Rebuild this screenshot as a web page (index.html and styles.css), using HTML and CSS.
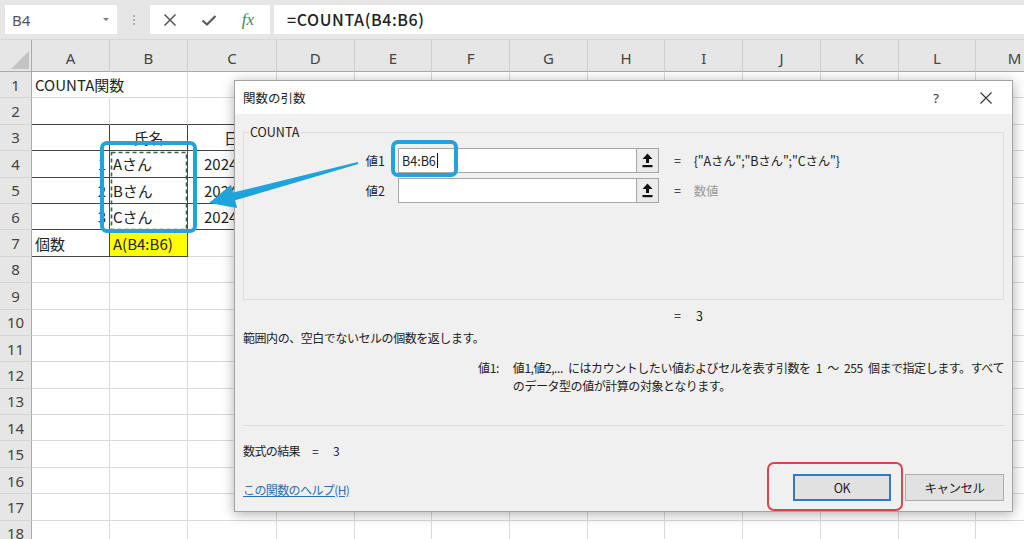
FILE: index.html
```html
<!DOCTYPE html>
<html lang="ja">
<head>
<meta charset="utf-8">
<title>COUNTA関数</title>
<link rel="stylesheet" href="styles.css">
</head>
<body>
<div class="app">
  <div class="fbar">
    <div class="namebox"><span>B4</span><svg class="dd" width="8" height="5" viewBox="0 0 8 5"><path d="M1 1 L4 4 L7 1 Z" fill="#7a7a7a"/></svg></div>
    <div class="grip"><svg width="4" height="12" viewBox="0 0 4 12"><circle cx="2" cy="2" r="1" fill="#9a9a9a"/><circle cx="2" cy="6" r="1" fill="#9a9a9a"/><circle cx="2" cy="10" r="1" fill="#9a9a9a"/></svg></div>
    <div class="fbtns">
      <svg class="fic" width="16" height="16" viewBox="0 0 16 16"><path d="M2.5 2.5 L13.5 13.5 M13.5 2.5 L2.5 13.5" stroke="#5a5a5a" stroke-width="1.6" fill="none"/></svg>
      <svg class="fic" width="16" height="16" viewBox="0 0 16 16"><path d="M1.5 8.5 L6 12.5 L14.5 4" stroke="#5a5a5a" stroke-width="2.2" fill="none"/></svg>
      <span class="fx">fx</span>
    </div>
    <div class="formula">=COUNTA(B4:B6)</div>
  </div>

  <div class="sheet">
    <div class="corner"><svg width="32" height="32" viewBox="0 0 32 32"><path d="M11 29 L29 29 L29 11 Z" fill="#c3c3c3"/></svg></div>
    <div class="ch">A</div><div class="ch">B</div><div class="ch">C</div><div class="ch">D</div><div class="ch">E</div><div class="ch">F</div><div class="ch">G</div><div class="ch">H</div><div class="ch">I</div><div class="ch">J</div><div class="ch">K</div><div class="ch">L</div><div class="ch">M</div>

    <div class="rh">1</div><div class="c nr">COUNTA関数</div><div class="c"></div><div class="c"></div><div class="c"></div><div class="c"></div><div class="c"></div><div class="c"></div><div class="c"></div><div class="c"></div><div class="c"></div><div class="c"></div><div class="c"></div><div class="c"></div>
    <div class="rh">2</div><div class="c db"></div><div class="c db"></div><div class="c db"></div><div class="c"></div><div class="c"></div><div class="c"></div><div class="c"></div><div class="c"></div><div class="c"></div><div class="c"></div><div class="c"></div><div class="c"></div><div class="c"></div>
    <div class="rh">3</div><div class="c db dr"></div><div class="c db dr ctr">氏名</div><div class="c db cc">日付</div><div class="c"></div><div class="c"></div><div class="c"></div><div class="c"></div><div class="c"></div><div class="c"></div><div class="c"></div><div class="c"></div><div class="c"></div><div class="c"></div>
    <div class="rh">4</div><div class="c db dr rt">1</div><div class="c db dr">Aさん</div><div class="c db cd">2024/4/1</div><div class="c"></div><div class="c"></div><div class="c"></div><div class="c"></div><div class="c"></div><div class="c"></div><div class="c"></div><div class="c"></div><div class="c"></div><div class="c"></div>
    <div class="rh">5</div><div class="c db dr rt">2</div><div class="c db dr">Bさん</div><div class="c db cd">2024/4/2</div><div class="c"></div><div class="c"></div><div class="c"></div><div class="c"></div><div class="c"></div><div class="c"></div><div class="c"></div><div class="c"></div><div class="c"></div><div class="c"></div>
    <div class="rh">6</div><div class="c db dr rt">3</div><div class="c db dr">Cさん</div><div class="c db cd">2024/4/3</div><div class="c"></div><div class="c"></div><div class="c"></div><div class="c"></div><div class="c"></div><div class="c"></div><div class="c"></div><div class="c"></div><div class="c"></div><div class="c"></div>
    <div class="rh">7</div><div class="c db dr">個数</div><div class="c db dr yel">A(B4:B6)</div><div class="c"></div><div class="c"></div><div class="c"></div><div class="c"></div><div class="c"></div><div class="c"></div><div class="c"></div><div class="c"></div><div class="c"></div><div class="c"></div><div class="c"></div>
    <div class="rh">8</div><div class="c"></div><div class="c"></div><div class="c"></div><div class="c"></div><div class="c"></div><div class="c"></div><div class="c"></div><div class="c"></div><div class="c"></div><div class="c"></div><div class="c"></div><div class="c"></div><div class="c"></div>
    <div class="rh">9</div><div class="c"></div><div class="c"></div><div class="c"></div><div class="c"></div><div class="c"></div><div class="c"></div><div class="c"></div><div class="c"></div><div class="c"></div><div class="c"></div><div class="c"></div><div class="c"></div><div class="c"></div>
    <div class="rh">10</div><div class="c"></div><div class="c"></div><div class="c"></div><div class="c"></div><div class="c"></div><div class="c"></div><div class="c"></div><div class="c"></div><div class="c"></div><div class="c"></div><div class="c"></div><div class="c"></div><div class="c"></div>
    <div class="rh">11</div><div class="c"></div><div class="c"></div><div class="c"></div><div class="c"></div><div class="c"></div><div class="c"></div><div class="c"></div><div class="c"></div><div class="c"></div><div class="c"></div><div class="c"></div><div class="c"></div><div class="c"></div>
    <div class="rh">12</div><div class="c"></div><div class="c"></div><div class="c"></div><div class="c"></div><div class="c"></div><div class="c"></div><div class="c"></div><div class="c"></div><div class="c"></div><div class="c"></div><div class="c"></div><div class="c"></div><div class="c"></div>
    <div class="rh">13</div><div class="c"></div><div class="c"></div><div class="c"></div><div class="c"></div><div class="c"></div><div class="c"></div><div class="c"></div><div class="c"></div><div class="c"></div><div class="c"></div><div class="c"></div><div class="c"></div><div class="c"></div>
    <div class="rh">14</div><div class="c"></div><div class="c"></div><div class="c"></div><div class="c"></div><div class="c"></div><div class="c"></div><div class="c"></div><div class="c"></div><div class="c"></div><div class="c"></div><div class="c"></div><div class="c"></div><div class="c"></div>
    <div class="rh">15</div><div class="c"></div><div class="c"></div><div class="c"></div><div class="c"></div><div class="c"></div><div class="c"></div><div class="c"></div><div class="c"></div><div class="c"></div><div class="c"></div><div class="c"></div><div class="c"></div><div class="c"></div>
    <div class="rh">16</div><div class="c"></div><div class="c"></div><div class="c"></div><div class="c"></div><div class="c"></div><div class="c"></div><div class="c"></div><div class="c"></div><div class="c"></div><div class="c"></div><div class="c"></div><div class="c"></div><div class="c"></div>
    <div class="rh">17</div><div class="c"></div><div class="c"></div><div class="c"></div><div class="c"></div><div class="c"></div><div class="c"></div><div class="c"></div><div class="c"></div><div class="c"></div><div class="c"></div><div class="c"></div><div class="c"></div><div class="c"></div>
    <div class="rh">18</div><div class="c"></div><div class="c"></div><div class="c"></div><div class="c"></div><div class="c"></div><div class="c"></div><div class="c"></div><div class="c"></div><div class="c"></div><div class="c"></div><div class="c"></div><div class="c"></div><div class="c"></div>
  </div>

  <div class="dialog">
    <div class="dtitle">
      <span class="dname">関数の引数</span>
      <span class="dq">?</span>
      <span class="dx"><svg width="12" height="12" viewBox="0 0 12 12"><path d="M0.5 0.5 L11.5 11.5 M11.5 0.5 L0.5 11.5" stroke="#333" stroke-width="1.1" fill="none"/></svg></span>
    </div>
    <div class="dbody">
      <div class="group">
        <div class="legend">COUNTA</div>
        <div class="args">
          <div class="alabel">値1</div>
          <div class="ainput"><span>B4:B6</span><span class="caret"></span></div>
          <div class="abtn"><svg width="11" height="15" viewBox="0 0 11 15"><path d="M5.5 0.5 L10.5 6 L7 6 L7 10 L4 10 L4 6 L0.5 6 Z" fill="#111"/><rect x="0.5" y="12" width="10" height="2.2" fill="#111"/></svg></div>
          <div class="aeq"><span>=</span><span class="aval">{"Aさん";"Bさん";"Cさん"}</span></div>
          <div class="alabel">値2</div>
          <div class="ainput"></div>
          <div class="abtn"><svg width="11" height="15" viewBox="0 0 11 15"><path d="M5.5 0.5 L10.5 6 L7 6 L7 10 L4 10 L4 6 L0.5 6 Z" fill="#111"/><rect x="0.5" y="12" width="10" height="2.2" fill="#111"/></svg></div>
          <div class="aeq"><span>=</span><span class="aval muted">数値</span></div>
        </div>
      </div>
      <div class="eqres"><span>=</span><span>3</span></div>
      <div class="desc">範囲内の、空白でないセルの個数を返します。</div>
      <div class="argdesc">
        <div class="adl">値1:</div>
        <div class="adt">値1,値2,... にはカウントしたい値およびセルを表す引数を 1 ～ 255 個まで指定します。すべて<br>のデータ型の値が計算の対象となります。</div>
      </div>
      <div class="sep"></div>
      <div class="result"><span>数式の結果</span><span class="req">=</span><span class="rval">3</span></div>
      <div class="footer">
        <a class="help" href="#">この関数のヘルプ(H)</a>
        <div class="btns">
          <div class="btn ok">OK</div>
          <div class="btn">キャンセル</div>
        </div>
      </div>
    </div>
  </div>

  <svg class="overlay" width="1024" height="539" viewBox="0 0 1024 539">
    <rect x="111.5" y="152.5" width="75" height="77" fill="none" stroke="#2f6a50" stroke-width="1.6" stroke-dasharray="4 3"/>
    <polygon points="209,203 231,184.8 233.1,192.5 357.7,162 358.3,164 235.1,200.3 237.2,208" fill="#1fa3dd"/>
  </svg>
  <div class="hl hl-range"></div>
  <div class="hl hl-input"></div>
  <div class="hl-red"></div>
</div>
</body>
</html>
```

FILE: styles.css
```css
* { box-sizing: border-box; }
html, body { margin: 0; padding: 0; }
body {
  width: 1024px;
  height: 539px;
  overflow: hidden;
  background: #fff;
  font-family: "Noto Sans CJK JP", "Noto Sans", sans-serif;
  color: #222;
}
.app { position: relative; width: 1024px; height: 539px; overflow: hidden; }

/* formula bar */
.fbar {
  height: 40px;
  background: #e6e6e6;
  display: flex;
  align-items: flex-start;
  padding: 5px 0 0 5px;
  border-bottom: 1px solid #d8d8d8;
}
.namebox {
  width: 112px;
  height: 29px;
  background: #fff;
  display: flex;
  align-items: center;
  justify-content: space-between;
  padding: 0 7px 0 7px;
  font-family: "Noto Sans", sans-serif;
  font-size: 15px;
  color: #555;
}
.grip { width: 33px; height: 29px; display: flex; align-items: center; justify-content: center; }
.fbtns {
  width: 120px;
  height: 29px;
  background: #fff;
  display: flex;
  align-items: center;
  padding-left: 12px;
  gap: 23px;
}
.fic { flex: none; }
.fx {
  width: 16px;
  font-family: "Liberation Serif", serif;
  font-style: italic;
  font-size: 17px;
  color: #3f8a58;
  line-height: 1;
  text-align: center;
}
.formula {
  flex: 1;
  height: 29px;
  margin-left: 4px;
  background: #fff;
  padding-left: 13px;
  font-size: 16px;
  line-height: 29px;
  font-weight: 500;
  letter-spacing: 0.6px;
  color: #222;
}

/* sheet */
.sheet {
  display: grid;
  grid-template-columns: 32px 78px 78px 89px repeat(10, 77.7px);
  grid-template-rows: 32px;
  grid-auto-rows: 26.4px;
  width: 1056px;
}
.corner { background: #e6e6e6; border-right: 1px solid #ababab; border-bottom: 1px solid #ababab; }
.corner svg { display: block; }
.ch {
  background: #e6e6e6;
  border-right: 1px solid #cfcfcf;
  border-bottom: 1px solid #ababab;
  display: flex;
  align-items: center;
  justify-content: center;
  padding-top: 4px;
  font-family: "Noto Sans", sans-serif;
  font-size: 15px;
  color: #444;
}
.rh {
  background: #e6e6e6;
  border-right: 1px solid #ababab;
  border-bottom: 1px solid #d4d4d4;
  display: flex;
  align-items: center;
  justify-content: center;
  font-family: "Noto Sans", sans-serif;
  font-size: 15px;
  color: #444;
}
.c {
  border-right: 1px solid #dadada;
  border-bottom: 1px solid #dadada;
  display: flex;
  align-items: center;
  padding: 0 3px;
  white-space: nowrap;
  overflow: visible;
  font-size: 15px;
  color: #222;
}
.c.nr { border-right-color: transparent; }
.c.db { border-bottom-color: #444; }
.c.dr { border-right-color: #444; }
.c.ctr { justify-content: center; }
.c.rt { justify-content: flex-end; padding-right: 3px; }
.c.cc { padding-left: 36px; overflow: hidden; }
.c.cd { padding-left: 16px; overflow: hidden; }
.c.yel { background: #ffff00; overflow: hidden; }

/* dialog */
.dialog {
  position: absolute;
  left: 234px;
  top: 80px;
  width: 779px;
  height: 432px;
  background: #f0f0f0;
  border: 1px solid #a3a3a3;
  box-shadow: 0 2px 12px rgba(0, 0, 0, 0.32);
  display: flex;
  flex-direction: column;
  font-size: 12px;
  color: #222;
}
.dtitle {
  height: 33px;
  background: #fff;
  display: flex;
  align-items: center;
  padding-left: 8px;
}
.dname { flex: 1; font-size: 12.5px; color: #222; }
.dq { width: 30px; text-align: center; font-family: "Noto Sans", sans-serif; font-size: 13px; color: #333; }
.dx { width: 30px; margin: 0 11px 0 20px; display: flex; justify-content: center; }
.dx svg { display: block; }

.dbody { flex: 1; padding: 0 8px; display: flex; flex-direction: column; }
.group {
  margin-top: 18px;
  height: 168px;
  border: 1px solid #dcdcdc;
}
.legend {
  width: fit-content;
  margin: -9px 0 0 5px;
  padding: 0 1px;
  background: #f0f0f0;
  line-height: 16px;
  font-size: 12.5px;
}
.args {
  margin-top: 8px;
  display: grid;
  grid-template-columns: 154px 238px 23px 1fr;
  grid-auto-rows: 25px;
  row-gap: 5px;
}
.alabel {
  display: flex;
  align-items: center;
  justify-content: flex-end;
  padding-right: 13px;
  font-size: 12.5px;
}
.ainput {
  background: #fff;
  border: 1px solid #a6a6a6;
  border-right: none;
  display: flex;
  align-items: center;
  padding-left: 3px;
  font-size: 12.5px;
}
.caret { width: 1px; height: 15px; background: #111; margin-left: 1px; }
.abtn {
  background: #ebebeb;
  border: 1px solid #a6a6a6;
  display: flex;
  align-items: center;
  justify-content: center;
}
.abtn svg { display: block; }
.aeq {
  display: flex;
  align-items: center;
  padding-left: 15px;
  gap: 13px;
  font-size: 12.5px;
  letter-spacing: -0.2px;
}
.muted { color: #9a9a9a; }

.eqres {
  margin: 8px 0 0 431px;
  line-height: 16px;
  display: flex;
  gap: 15px;
  font-size: 12.5px;
}
.desc {
  margin-top: 6px;
  line-height: 16px;
  letter-spacing: -0.45px;
  white-space: nowrap;
}
.argdesc {
  margin: 13px 0 0 235px;
  display: flex;
  line-height: 18px;
  white-space: nowrap;
}
.adl { width: 36px; letter-spacing: -0.3px; }
.adt { letter-spacing: -0.45px; word-spacing: 3px; }
.sep { margin-top: 30px; height: 1px; background: #dcdcdc; }
.result {
  margin-top: 17px;
  line-height: 16px;
  display: flex;
  letter-spacing: -0.6px;
}
.req { margin-left: 12px; }
.rval { margin-left: 15px; }
.footer {
  margin-top: 15px;
  display: flex;
  align-items: flex-end;
  justify-content: space-between;
}
.help {
  color: #2b6fb5;
  text-decoration: underline;
  line-height: 16px;
  margin-bottom: 3px;
  letter-spacing: -0.6px;
}
.btns { display: flex; gap: 14px; }
.btn {
  width: 99px;
  height: 27px;
  background: #e1e1e1;
  border: 1px solid #adadad;
  display: flex;
  align-items: center;
  justify-content: center;
  font-size: 12.5px;
  letter-spacing: -0.5px;
}
.btn.ok { width: 98px; border: 2px solid #2b7cc4; }

/* overlays */
.overlay { position: absolute; left: 0; top: 0; pointer-events: none; }
.hl {
  position: absolute;
  border: 4px solid #22a3de;
  border-radius: 7px;
}
.hl-range { left: 100px; top: 141px; width: 97px; height: 92px; }
.hl-input { left: 391px; top: 140px; width: 67px; height: 37px; }
.hl-red {
  position: absolute;
  left: 767px;
  top: 462px;
  width: 136px;
  height: 49px;
  border: 2px solid #d8464b;
  border-radius: 7px;
}
```
